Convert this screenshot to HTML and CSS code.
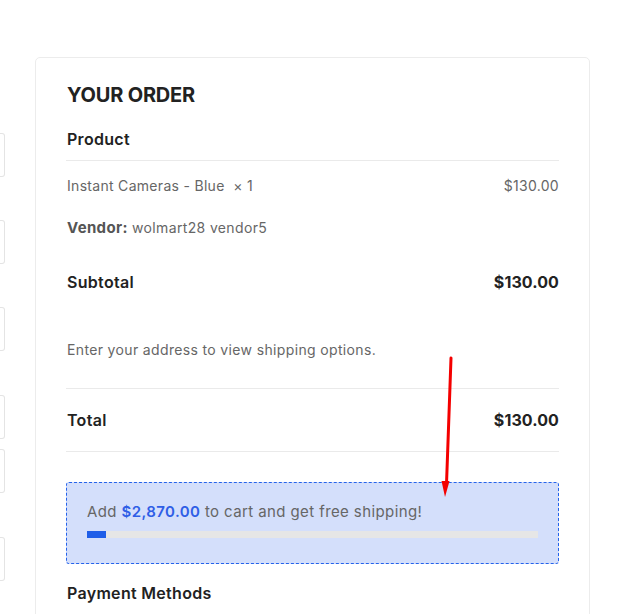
FILE: index.html
```html
<!DOCTYPE html>
<html lang="en">
<head>
<meta charset="utf-8">
<title>Your Order</title>
<link rel="stylesheet" href="styles.css">
</head>
<body>
<div class="page">
  <div class="form-col">
    <div class="field f1"></div>
    <div class="field f2"></div>
    <div class="field f3"></div>
    <div class="field f4"></div>
    <div class="field f5"></div>
    <div class="field f6"></div>
  </div>
  <div class="order-card">
    <h3 class="order-title">YOUR ORDER</h3>
    <div class="row head-row"><span>Product</span></div>
    <div class="row item-row">
      <span>Instant Cameras - Blue&nbsp; <span class="qty">× 1</span></span>
      <span>$130.00</span>
    </div>
    <div class="row vendor-row"><span><strong>Vendor:</strong> wolmart28 vendor5</span></div>
    <div class="row subtotal-row"><span>Subtotal</span><span>$130.00</span></div>
    <div class="row ship-row"><span>Enter your address to view shipping options.</span></div>
    <div class="row total-row"><span>Total</span><span>$130.00</span></div>
    <div class="free-ship">
      <p class="free-text">Add <span class="amount">$2,870.00</span> to cart and get free shipping!</p>
      <div class="bar"><div class="bar-fill" style="width:4.2%"></div></div>
    </div>
    <h4 class="pay-title">Payment Methods</h4>
  </div>
  <svg class="arrow" width="20" height="150" viewBox="0 0 20 150">
    <line x1="11" y1="2" x2="6.5" y2="128" stroke="#f40000" stroke-width="3" stroke-linecap="round"/>
    <polygon points="1.5,125 9.5,125 5,141" fill="#f40000"/>
  </svg>
</div>
</body>
</html>
```

FILE: styles.css
```css
* { box-sizing: border-box; }
html, body { margin: 0; padding: 0; background: #fff; }
body {
  font-family: Inter, "Noto Sans", "Liberation Sans", sans-serif;
  color: #222;
  width: 642px;
  height: 614px;
  overflow: hidden;
}
.page {
  position: relative;
  display: flex;
  align-items: flex-start;
  gap: 30px;
  height: 614px;
  overflow: hidden;
}
.form-col {
  width: 5px;
  flex: none;
  display: flex;
  flex-direction: column;
}
.field {
  height: 44px;
  border: 1px solid #e4e4e4;
  border-left: none;
  border-radius: 0 3px 3px 0;
}
.f1 { margin-top: 133px; }
.f2 { margin-top: 43px; }
.f3 { margin-top: 43px; }
.f4 { margin-top: 44px; }
.f5 { margin-top: 10px; }
.f6 { margin-top: 44px; }

.order-card {
  margin-top: 57px;
  width: 555px;
  flex: none;
  border: 1px solid #ececec;
  border-radius: 5px;
  padding: 0 30px 60px 30px;
}
.order-title {
  margin: 25px 0 0 1px;
  font-size: 20px;
  line-height: 24px;
  font-weight: 700;
  letter-spacing: -0.2px;
  color: #222;
}
.row {
  display: flex;
  justify-content: space-between;
  align-items: center;
  padding-left: 1px;
}
.head-row {
  padding-top: 20px;
  padding-bottom: 9px;
  border-bottom: 1px solid #eaeaea;
  font-size: 16px;
  line-height: 24px;
  font-weight: 600;
  letter-spacing: 0.3px;
}
.item-row {
  padding-top: 15px;
  font-size: 14px;
  line-height: 20px;
  color: #666;
  letter-spacing: 0.3px;
}
.qty { color: #666; }
.vendor-row {
  padding-top: 22px;
  font-size: 14px;
  line-height: 20px;
  color: #666;
  letter-spacing: 0.35px;
}
.vendor-row strong { font-size: 15px; font-weight: 700; color: #555; }
.subtotal-row {
  padding-top: 32px;
  font-size: 16px;
  line-height: 24px;
  font-weight: 600;
  letter-spacing: 0.3px;
}
.subtotal-row span:last-child { font-weight: 700; letter-spacing: 0.1px; }
.ship-row {
  padding-top: 46px;
  padding-bottom: 28px;
  border-bottom: 1px solid #eaeaea;
  font-size: 14px;
  line-height: 20px;
  color: #666;
  letter-spacing: 0.35px;
}
.total-row {
  padding-top: 19px;
  padding-bottom: 19px;
  border-bottom: 1px solid #eaeaea;
  font-size: 16px;
  line-height: 24px;
  font-weight: 600;
  letter-spacing: 0.3px;
}
.total-row span:last-child { font-weight: 700; letter-spacing: 0.1px; }
.free-ship {
  margin-top: 30px;
  height: 82px;
  background: #d4dffb;
  border: 1px dashed #2563eb;
  border-radius: 3px;
  padding: 19px 20px 0 20px;
}
.free-text {
  margin: 0;
  font-size: 15px;
  line-height: 20px;
  color: #666;
  letter-spacing: 0.4px;
}
.amount { color: #2f5ee6; font-weight: 600; }
.bar {
  margin-top: 9px;
  height: 7px;
  background: #e6e6e6;
}
.bar-fill {
  height: 100%;
  background: #1f5ee8;
}
.pay-title {
  margin: 17px 0 0 1px;
  font-size: 16px;
  line-height: 24px;
  font-weight: 600;
  letter-spacing: 0.3px;
}
.arrow {
  position: absolute;
  left: 440px;
  top: 356px;
}
```
